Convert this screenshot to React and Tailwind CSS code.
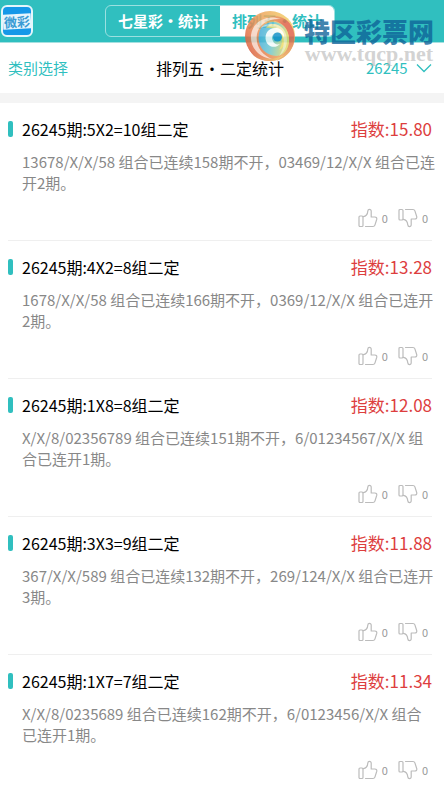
import { useState } from 'react';

const TABS = ['七星彩・统计', '排列五・统计'];

const ISSUES = ['26245', '26244', '26243'];

const STATS = [
  { id: 1, title: '26245期:5X2=10组二定', index: '15.80', detail: '13678/X/X/58 组合已连续158期不开，03469/12/X/X 组合已连开2期。' },
  { id: 2, title: '26245期:4X2=8组二定', index: '13.28', detail: '1678/X/X/58 组合已连续166期不开，0369/12/X/X 组合已连开2期。' },
  { id: 3, title: '26245期:1X8=8组二定', index: '12.08', detail: 'X/X/8/02356789 组合已连续151期不开，6/01234567/X/X 组合已连开1期。' },
  { id: 4, title: '26245期:3X3=9组二定', index: '11.88', detail: '367/X/X/589 组合已连续132期不开，269/124/X/X 组合已连开3期。' },
  { id: 5, title: '26245期:1X7=7组二定', index: '11.34', detail: 'X/X/8/0235689 组合已连续162期不开，6/0123456/X/X 组合已连开1期。' },
];

function ThumbIcon({ down }) {
  return (
    <svg
      viewBox="0 0 20 20"
      className={down ? 'size-5 -scale-y-100' : 'size-5'}
      fill="none"
      stroke="#bcbcbc"
      strokeWidth="1.2"
      strokeLinejoin="round"
      strokeLinecap="round"
      aria-hidden="true"
    >
      <rect x="1" y="8" width="4" height="10.500" rx="1" />
      <path d="M7.500 18.500h7.500c1 0 1.600-.5 1.900-1.400l1.800-5.600c.4-1.400-.4-2.500-1.800-2.500h-3.700V3.200c0-1.100-.7-1.800-1.700-1.800s-1.600.7-1.700 1.700C9.600 5.700 8.600 8.300 5.200 8.700" />
    </svg>
  );
}

function VoteButton({ down, label }) {
  const [count, setCount] = useState(0);

  return (
    <button
      type="button"
      aria-label={label}
      onClick={() => setCount((prev) => prev + 1)}
      className="flex items-center gap-1 text-[11px] leading-5 text-[#999]"
    >
      <ThumbIcon down={down} />
      <span>{count}</span>
    </button>
  );
}

function StatItem({ item }) {
  return (
    <li className="mr-3 ml-2 border-b border-[#efefef] pt-4 pb-3">
      <div className="flex items-center justify-between">
        <h2 className="flex items-center gap-[9px] text-base leading-5 text-black">
          <span className="h-4 w-[5px] rounded-xs bg-[#30bfbf]" />
          {item.title}
        </h2>
        <span className="text-[17px] leading-5 text-[#dd3e3e]">指数:{item.index}</span>
      </div>
      <p className="mt-3 -mr-1 ml-[14px] text-[15px] leading-[21px] text-[#888]">{item.detail}</p>
      <div className="mt-3.5 mr-1 flex justify-end gap-2.5 pt-px">
        <VoteButton label="赞" />
        <VoteButton down label="踩" />
      </div>
    </li>
  );
}

function Logo() {
  return (
    <a
      href="#home"
      className="ml-px flex size-8 items-center justify-center overflow-hidden rounded-md border-2 border-[#e4f6fb] bg-[#1598e8]"
    >
      <span className="w-full shrink-0 -rotate-3 bg-[#e6f5fd] text-center text-[13px] leading-[15px] font-bold text-[#3a9bd4]">
        微彩
      </span>
    </a>
  );
}

function Swirl() {
  return (
    <svg viewBox="0 0 52 52" className="size-[52px] opacity-85" aria-hidden="true">
      <defs>
        <linearGradient id="outer" x1="0" y1="0.7" x2="1" y2="0.2">
          <stop offset="0" stopColor="#dc5f42" />
          <stop offset="0.45" stopColor="#eda05c" />
          <stop offset="1" stopColor="#f4d468" />
        </linearGradient>
        <linearGradient id="right" x1="0" y1="0" x2="0.3" y2="1">
          <stop offset="0" stopColor="#f0b85c" />
          <stop offset="0.35" stopColor="#e0654a" />
          <stop offset="0.7" stopColor="#e0654a" />
          <stop offset="1" stopColor="#e8a458" />
        </linearGradient>
        <linearGradient id="inner" x1="0" y1="0" x2="1" y2="0.2">
          <stop offset="0" stopColor="#3fa9dc" />
          <stop offset="0.5" stopColor="#6cc6d2" />
          <stop offset="1" stopColor="#dfd96c" />
        </linearGradient>
        <linearGradient id="bottom" x1="0" y1="0" x2="1" y2="0">
          <stop offset="0" stopColor="#d9583f" />
          <stop offset="1" stopColor="#efd063" />
        </linearGradient>
      </defs>
      {/* warm outer arms */}
      <circle cx="26" cy="26" r="25" fill="url(#outer)" />
      <path d="M14 13C26 1 44 5 49 19c5 14-3 28-17 32 11-8 15-18 12-28C40 11 26 7 14 13Z" fill="url(#right)" />
      <path d="M4 37c8 12 23 15 36 8-5 5-10 6-15 6C14 51 8 46 4 37Z" fill="url(#bottom)" />
      {/* cool core */}
      <path d="M17 18c-7 14 2 28 16 28 8-1 12-8 12-16C45 18 37 11 27 12c-4 1-8 3-10 6Z" fill="url(#inner)" />
      <path d="M27 14c9-1 15 6 15 14 0 6-3 10-7 12 3-5 4-9 2-14-2-6-8-9-15-8 1-2 3-3 5-4Z" fill="#eedb6a" />
      <path d="M22 31c-2-8 3-14 11-13 5 1 8 5 7 10-1-4-4-6-8-5-4 1-5 5-3 8 1 3 4 4 7 3-5 5-12 3-14-3Z" fill="#fff" opacity="0.9" />
      <circle cx="33.500" cy="27" r="4.500" fill="#1692c8" />
      {/* pale separators between the arms */}
      <path d="M7 25C9 11 23 4 37 9 25 8 15 14 13 24c-2 12 5 21 15 25C15 47 6 38 7 25Z" fill="#fff" opacity="0.65" />
      <path d="M16 18c10-8 23-4 26 6 3 9-1 18-7 22 4-6 6-13 4-19-3-9-13-13-23-9Z" fill="#fff" opacity="0.45" />
    </svg>
  );
}

function Watermark() {
  return (
    <div className="pointer-events-none absolute top-2.5 right-2.5 flex gap-2">
      <Swirl />
      <div className="flex flex-col items-center pt-1">
        <span className="text-[26px] leading-[34px] font-black text-[#0e6298]/80">特区彩票网</span>
        <span className="-mt-1 font-['Liberation_Serif',serif] text-[22px] leading-5 font-bold text-[#b5b5b5]/60">
          www.tqcp.net
        </span>
      </div>
    </div>
  );
}

function App() {
  const [tab, setTab] = useState(1);
  const [issue, setIssue] = useState(ISSUES[0]);

  return (
    <div className="relative min-h-screen bg-white font-['Noto_Sans_CJK_SC',sans-serif]">
      <header className="grid h-[43px] grid-cols-[1fr_auto_1fr] items-center border-b border-[#a5e0e0] bg-[#30bfbf] pr-1">
        <Logo />
        <nav className="flex h-8 overflow-hidden rounded-md border border-[#9be0e0]">
          {TABS.map((label, i) => (
            <button
              key={label}
              type="button"
              onClick={() => setTab(i)}
              className={`px-3 text-[15px] font-bold ${
                tab === i ? 'bg-white text-[#30bfbf]' : 'text-white'
              }`}
            >
              {label}
            </button>
          ))}
        </nav>
      </header>

      <div className="grid h-[50px] grid-cols-[1fr_auto_1fr] items-center pr-3 pl-2">
        <button type="button" className="justify-self-start text-[15px] text-[#30bfbf]">
          类别选择
        </button>
        <h1 className="text-base text-black">排列五・二定统计</h1>
        <label className="flex items-center gap-2 justify-self-end text-[#30bfbf]">
          <select
            aria-label="期号"
            value={issue}
            onChange={(e) => setIssue(e.target.value)}
            className="appearance-none text-[15px]"
          >
            {ISSUES.map((no) => (
              <option key={no}>{no}</option>
            ))}
          </select>
          <svg viewBox="0 0 16 10" className="h-2.5 w-4" fill="none" stroke="currentColor" strokeWidth="1.3" aria-hidden="true">
            <path d="M1 1.500 8 8.500l7-7" />
          </svg>
        </label>
      </div>

      <div className="h-2.5 bg-[#f4f4f4]" />

      <ul>
        {STATS.map((item) => (
          <StatItem key={item.id} item={item} />
        ))}
      </ul>

      <Watermark />
    </div>
  );
}

export default App;
